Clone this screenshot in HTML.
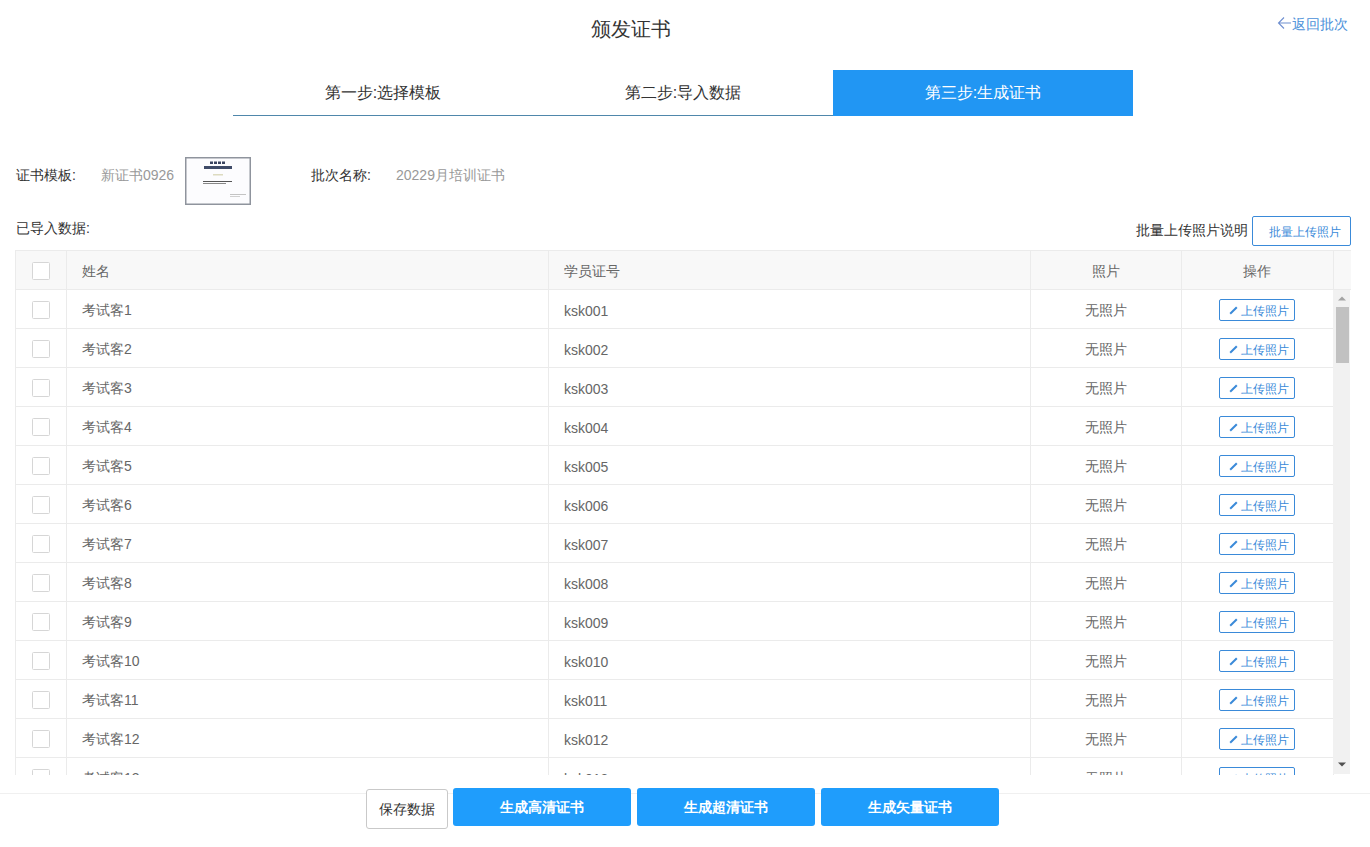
<!DOCTYPE html>
<html><head><meta charset="utf-8"><style>
*{box-sizing:border-box;margin:0;padding:0}
html,body{width:1370px;height:847px;overflow:hidden;background:#fff}
body{position:relative;font-family:"Liberation Sans",sans-serif;font-size:14px;color:#333}
.abs{position:absolute;white-space:nowrap}
.title{left:0;top:17px;width:1261px;text-align:center;font-size:20px;line-height:24px;color:#333}
.back{left:1292px;top:14px;font-size:14px;line-height:20px;color:#4a90d9}
.steps{left:233px;top:70px;width:900px;height:46px}
.step{position:absolute;top:0;width:300px;height:46px;line-height:45px;text-align:center;font-size:16px;color:#333}
.step.line{border-bottom:1px solid #4f87ab}
.step.on{background:#2196f3;color:#fff}
.lbl{font-size:14px;line-height:20px;color:#333}
.val{font-size:14px;line-height:20px;color:#999}
.thumb{left:185px;top:157px;width:66px;height:48px}
.btn-o{border:1px solid #3a8ad9;border-radius:2px;color:#3a8ad9;background:#fff}
.tbl{left:15px;top:250px;width:1336px;height:525px;overflow:hidden;border-left:1px solid #ebebeb}
.hdr{position:absolute;left:0;top:0;width:1335px;height:40px;background:#f8f8f8;border-top:1px solid #ebebeb;border-bottom:1px solid #ebebeb}
.vl{position:absolute;top:0;width:1px;background:#ebebeb}
.row{position:absolute;left:0;width:1318px;height:39px;border-bottom:1px solid #ebebeb;background:#fff}
.cb{position:absolute;left:16px;width:18px;height:18px;border:1px solid #d6d6d6;border-radius:1.5px;background:#fff}
.txt{position:absolute;font-size:14px;line-height:20px;color:#666}
.up{position:absolute;left:1203px;width:76px;height:22px;font-size:12px;line-height:20px}
.up svg{position:absolute;left:9px;top:6px}
.up span{position:absolute;left:21px;top:1px}
.sb{left:1333px;top:290px;width:17px;height:484px;background:#f1f1f1}
.foot{left:0;top:793px;width:1370px;height:1px;background:#f0f0f0}
.fbtn{position:absolute;height:38px;top:788px;border-radius:3px;background:#1f9dfc;color:#fff;font-size:14px;font-weight:bold;text-align:center;line-height:39px}
</style></head><body>

<div class="abs title">颁发证书</div>
<svg class="abs" style="left:1277px;top:16px" width="15" height="14" viewBox="0 0 15 14"><path d="M7 1.5 L1.5 7 L7 12.5 M1.5 7 H14" fill="none" stroke="#6f8fd0" stroke-width="1.1"/></svg>
<div class="abs back">返回批次</div>
<div class="abs steps"><div class="step line" style="left:0">第一步:选择模板</div><div class="step line" style="left:300px">第二步:导入数据</div><div class="step on" style="left:600px">第三步:生成证书</div></div>
<div class="abs lbl" style="left:16px;top:165px">证书模板:</div>
<div class="abs val" style="left:101px;top:165px">新证书0926</div>
<svg class="abs thumb" width="66" height="48" viewBox="0 0 66 48">
<rect x="0.75" y="0.75" width="64.5" height="46.5" fill="#fcfcfe" stroke="#8f949d" stroke-width="1.5"/>
<rect x="25" y="4.5" width="3" height="2.5" fill="#3a4460"/><rect x="29" y="4.5" width="3" height="2.5" fill="#3a4460"/><rect x="33" y="4.5" width="3" height="2.5" fill="#3a4460"/><rect x="37" y="4.5" width="3" height="2.5" fill="#3a4460"/>
<rect x="19" y="9" width="28" height="3" fill="#3f4b68"/>
<rect x="28" y="17" width="10" height="1.5" fill="#d4d2b0" opacity="0.8"/>
<rect x="18" y="24" width="29" height="1" fill="#555"/>
<rect x="18" y="26" width="23" height="1" fill="#888"/>
<rect x="45" y="37" width="16" height="1" fill="#c4c4c4"/>
<rect x="45" y="39" width="10" height="1" fill="#d0d0d0"/>
</svg>
<div class="abs lbl" style="left:311px;top:165px">批次名称:</div>
<div class="abs val" style="left:396px;top:165px">20229月培训证书</div>
<div class="abs lbl" style="left:16px;top:218px">已导入数据:</div>
<div class="abs lbl" style="left:1136px;top:220px">批量上传照片说明</div>
<div class="abs btn-o" style="left:1252px;top:216px;width:99px;height:30px;font-size:12px;line-height:30px;padding-left:16px">批量上传照片</div>
<div class="abs tbl">
<div class="hdr">
<div class="cb" style="top:11px"></div>
<div class="txt" style="left:66px;top:10px">姓名</div>
<div class="txt" style="left:548px;top:10px">学员证号</div>
<div class="txt" style="left:1076px;top:10px">照片</div>
<div class="txt" style="left:1227px;top:10px">操作</div>
</div>
<div class="row" style="top:40px">
<div class="cb" style="top:11px"></div>
<div class="txt" style="left:66px;top:10px">考试客1</div>
<div class="txt" style="left:548px;top:11px">ksk001</div>
<div class="txt" style="left:1069px;top:10px">无照片</div>
<div class="up btn-o" style="top:9px"><svg width="9" height="9" viewBox="0 0 9 9"><path d="M1.2 7.8 L7.8 1.2" stroke="#3a8ad9" stroke-width="2" stroke-linecap="butt"/></svg><span>上传照片</span></div>
</div>
<div class="row" style="top:79px">
<div class="cb" style="top:11px"></div>
<div class="txt" style="left:66px;top:10px">考试客2</div>
<div class="txt" style="left:548px;top:11px">ksk002</div>
<div class="txt" style="left:1069px;top:10px">无照片</div>
<div class="up btn-o" style="top:9px"><svg width="9" height="9" viewBox="0 0 9 9"><path d="M1.2 7.8 L7.8 1.2" stroke="#3a8ad9" stroke-width="2" stroke-linecap="butt"/></svg><span>上传照片</span></div>
</div>
<div class="row" style="top:118px">
<div class="cb" style="top:11px"></div>
<div class="txt" style="left:66px;top:10px">考试客3</div>
<div class="txt" style="left:548px;top:11px">ksk003</div>
<div class="txt" style="left:1069px;top:10px">无照片</div>
<div class="up btn-o" style="top:9px"><svg width="9" height="9" viewBox="0 0 9 9"><path d="M1.2 7.8 L7.8 1.2" stroke="#3a8ad9" stroke-width="2" stroke-linecap="butt"/></svg><span>上传照片</span></div>
</div>
<div class="row" style="top:157px">
<div class="cb" style="top:11px"></div>
<div class="txt" style="left:66px;top:10px">考试客4</div>
<div class="txt" style="left:548px;top:11px">ksk004</div>
<div class="txt" style="left:1069px;top:10px">无照片</div>
<div class="up btn-o" style="top:9px"><svg width="9" height="9" viewBox="0 0 9 9"><path d="M1.2 7.8 L7.8 1.2" stroke="#3a8ad9" stroke-width="2" stroke-linecap="butt"/></svg><span>上传照片</span></div>
</div>
<div class="row" style="top:196px">
<div class="cb" style="top:11px"></div>
<div class="txt" style="left:66px;top:10px">考试客5</div>
<div class="txt" style="left:548px;top:11px">ksk005</div>
<div class="txt" style="left:1069px;top:10px">无照片</div>
<div class="up btn-o" style="top:9px"><svg width="9" height="9" viewBox="0 0 9 9"><path d="M1.2 7.8 L7.8 1.2" stroke="#3a8ad9" stroke-width="2" stroke-linecap="butt"/></svg><span>上传照片</span></div>
</div>
<div class="row" style="top:235px">
<div class="cb" style="top:11px"></div>
<div class="txt" style="left:66px;top:10px">考试客6</div>
<div class="txt" style="left:548px;top:11px">ksk006</div>
<div class="txt" style="left:1069px;top:10px">无照片</div>
<div class="up btn-o" style="top:9px"><svg width="9" height="9" viewBox="0 0 9 9"><path d="M1.2 7.8 L7.8 1.2" stroke="#3a8ad9" stroke-width="2" stroke-linecap="butt"/></svg><span>上传照片</span></div>
</div>
<div class="row" style="top:274px">
<div class="cb" style="top:11px"></div>
<div class="txt" style="left:66px;top:10px">考试客7</div>
<div class="txt" style="left:548px;top:11px">ksk007</div>
<div class="txt" style="left:1069px;top:10px">无照片</div>
<div class="up btn-o" style="top:9px"><svg width="9" height="9" viewBox="0 0 9 9"><path d="M1.2 7.8 L7.8 1.2" stroke="#3a8ad9" stroke-width="2" stroke-linecap="butt"/></svg><span>上传照片</span></div>
</div>
<div class="row" style="top:313px">
<div class="cb" style="top:11px"></div>
<div class="txt" style="left:66px;top:10px">考试客8</div>
<div class="txt" style="left:548px;top:11px">ksk008</div>
<div class="txt" style="left:1069px;top:10px">无照片</div>
<div class="up btn-o" style="top:9px"><svg width="9" height="9" viewBox="0 0 9 9"><path d="M1.2 7.8 L7.8 1.2" stroke="#3a8ad9" stroke-width="2" stroke-linecap="butt"/></svg><span>上传照片</span></div>
</div>
<div class="row" style="top:352px">
<div class="cb" style="top:11px"></div>
<div class="txt" style="left:66px;top:10px">考试客9</div>
<div class="txt" style="left:548px;top:11px">ksk009</div>
<div class="txt" style="left:1069px;top:10px">无照片</div>
<div class="up btn-o" style="top:9px"><svg width="9" height="9" viewBox="0 0 9 9"><path d="M1.2 7.8 L7.8 1.2" stroke="#3a8ad9" stroke-width="2" stroke-linecap="butt"/></svg><span>上传照片</span></div>
</div>
<div class="row" style="top:391px">
<div class="cb" style="top:11px"></div>
<div class="txt" style="left:66px;top:10px">考试客10</div>
<div class="txt" style="left:548px;top:11px">ksk010</div>
<div class="txt" style="left:1069px;top:10px">无照片</div>
<div class="up btn-o" style="top:9px"><svg width="9" height="9" viewBox="0 0 9 9"><path d="M1.2 7.8 L7.8 1.2" stroke="#3a8ad9" stroke-width="2" stroke-linecap="butt"/></svg><span>上传照片</span></div>
</div>
<div class="row" style="top:430px">
<div class="cb" style="top:11px"></div>
<div class="txt" style="left:66px;top:10px">考试客11</div>
<div class="txt" style="left:548px;top:11px">ksk011</div>
<div class="txt" style="left:1069px;top:10px">无照片</div>
<div class="up btn-o" style="top:9px"><svg width="9" height="9" viewBox="0 0 9 9"><path d="M1.2 7.8 L7.8 1.2" stroke="#3a8ad9" stroke-width="2" stroke-linecap="butt"/></svg><span>上传照片</span></div>
</div>
<div class="row" style="top:469px">
<div class="cb" style="top:11px"></div>
<div class="txt" style="left:66px;top:10px">考试客12</div>
<div class="txt" style="left:548px;top:11px">ksk012</div>
<div class="txt" style="left:1069px;top:10px">无照片</div>
<div class="up btn-o" style="top:9px"><svg width="9" height="9" viewBox="0 0 9 9"><path d="M1.2 7.8 L7.8 1.2" stroke="#3a8ad9" stroke-width="2" stroke-linecap="butt"/></svg><span>上传照片</span></div>
</div>
<div class="row" style="top:508px">
<div class="cb" style="top:11px"></div>
<div class="txt" style="left:66px;top:10px">考试客13</div>
<div class="txt" style="left:548px;top:11px">ksk013</div>
<div class="txt" style="left:1069px;top:10px">无照片</div>
<div class="up btn-o" style="top:9px"><svg width="9" height="9" viewBox="0 0 9 9"><path d="M1.2 7.8 L7.8 1.2" stroke="#3a8ad9" stroke-width="2" stroke-linecap="butt"/></svg><span>上传照片</span></div>
</div>
<div class="vl" style="left:50px;height:525px"></div>
<div class="vl" style="left:532px;height:525px"></div>
<div class="vl" style="left:1014px;height:525px"></div>
<div class="vl" style="left:1165px;height:525px"></div>
<div class="vl" style="left:1317px;height:525px"></div>
</div>
<div class="abs sb"></div>
<svg class="abs" style="left:1338px;top:296px" width="8" height="5" viewBox="0 0 8 5"><path d="M0 4.5 L4 0.5 L8 4.5Z" fill="#a3a3a3"/></svg>
<div class="abs" style="left:1336px;top:307px;width:13px;height:56px;background:#c1c1c1"></div>
<svg class="abs" style="left:1338px;top:762px" width="8" height="5" viewBox="0 0 8 5"><path d="M0 0.5 L4 4.5 L8 0.5Z" fill="#505050"/></svg>
<div class="abs foot"></div>
<div class="fbtn" style="left:366px;width:82px;height:40px;top:789px;background:#fff;border:1px solid #c9c9c9;color:#333;font-weight:normal;line-height:39px">保存数据</div>
<div class="fbtn" style="left:453px;width:178px">生成高清证书</div>
<div class="fbtn" style="left:637px;width:178px">生成超清证书</div>
<div class="fbtn" style="left:821px;width:178px">生成矢量证书</div>
</body></html>
